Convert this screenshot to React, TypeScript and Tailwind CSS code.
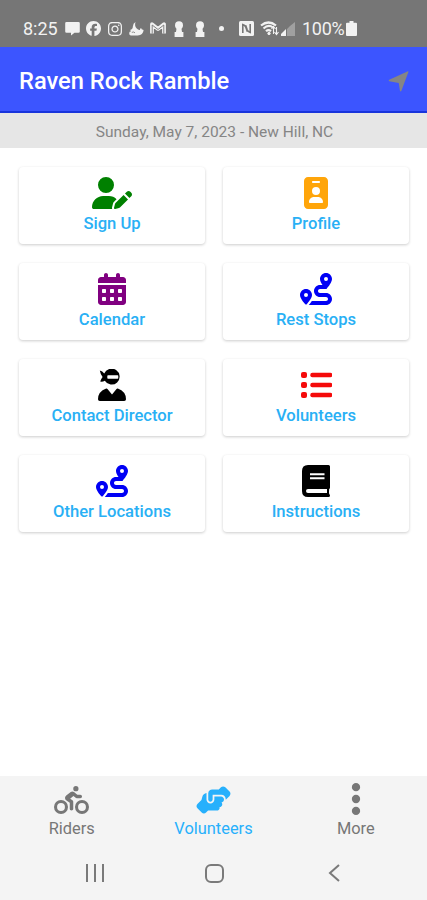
import React from 'react';
import {
  FaCalendarDays,
  FaEllipsisVertical,
  FaFacebook,
  FaHandshakeAngle,
  FaIdBadge,
  FaInstagram,
  FaPersonBiking,
  FaRoute,
  FaUserPen,
} from 'react-icons/fa6';

interface IconProps {
  className?: string;
}

interface MenuItem {
  label: string;
  icon: React.ComponentType<IconProps>;
  style: string;
}

const Ninja = ({ className }: IconProps) => (
  <svg viewBox="0 0 28 32" fill="currentColor" className={className}>
    <path d="M1.800 1.500Q4.500 2.200 6.200 4.600A8 8 0 1 1 6.800 11.800Q4.800 13 2.200 12.600 3.200 9.500 4.600 8 2.500 5.500 1.800 1.500z" />
    <rect x="9.300" y="6.300" width="11" height="3.400" rx=".7" fill="white" />
    <path d="M8.200 19.500q.8-.2 1.300.4L14 25.500l4.500-5.600q.5-.6 1.300-.4Q28 22.500 28 30.200q0 1.800-1.800 1.800H1.800Q0 32 0 30.200 0 22.500 8.200 19.500z" />
  </svg>
);

const List = ({ className }: IconProps) => (
  <svg viewBox="0 0 32 32" fill="currentColor" className={className}>
    {[3, 13, 23].map((y) => (
      <g key={y}>
        <rect x="1" y={y} width="6" height="6" rx="2" />
        <rect x="10.300" y={y + 0.8} width="22" height="4.400" rx="2" />
      </g>
    ))}
  </svg>
);

const Book = ({ className }: IconProps) => (
  <svg viewBox="0 0 28 32" fill="currentColor" className={className}>
    <path d="M6 0h20.500Q28 0 28 1.500v21q0 1-.8 1.500-.4 2.500 0 5 .8.500.8 1.500 0 1.500-1.500 1.500H6q-6 0-6-6V6Q0 0 6 0z" />
    <path d="M8 8.200h14.500v2H8zM8 12.200h14.500v2H8zM6 24h19v4H6q-2 0-2-2t2-2z" fill="white" />
  </svg>
);

const menuItems: MenuItem[] = [
  { label: 'Sign Up', icon: FaUserPen, style: 'w-10 text-[#008000]' },
  { label: 'Profile', icon: FaIdBadge, style: 'w-6 text-[#ffa50a]' },
  { label: 'Calendar', icon: FaCalendarDays, style: 'w-7 text-[#800080]' },
  { label: 'Rest Stops', icon: FaRoute, style: 'w-8 text-[#0000f5]' },
  { label: 'Contact Director', icon: Ninja, style: 'w-7 text-black' },
  { label: 'Volunteers', icon: List, style: 'w-8 text-[#f50a0a]' },
  { label: 'Other Locations', icon: FaRoute, style: 'w-8 text-[#0000f5]' },
  { label: 'Instructions', icon: Book, style: 'w-7 text-black' },
];

const Keyhole = ({ className }: IconProps) => (
  <svg viewBox="0 0 10 16" fill="currentColor" className={`h-4 w-2.5 ${className ?? ''}`}>
    <circle cx="5" cy="4.2" r="4" />
    <path d="M2.6 7h4.8l.6 4H9.4v5H.6v-5H2z" />
  </svg>
);

const StatusBar = () => (
  <div className="flex h-[47px] items-center bg-[#767676] pl-[23px] pt-[10px] text-[#f2f2f2]">
    <span className="w-[42px] text-[18px] leading-none">8:25</span>
    <svg viewBox="0 0 15 15" fill="currentColor" className="h-[15px] w-[15px]">
      <path d="M1.5 1h12q1.3 0 1.3 1.300v8.200q0 1.200-1.300 1.200H9.500L6 14.500v-2.800H1.500Q.2 11.700.2 10.500V2.300Q.2 1 1.500 1z" />
    </svg>
    <FaFacebook className="ml-1.5 h-[15px] w-[15px]" />
    <FaInstagram className="ml-1.5 h-4 w-4" />
    {/* Do-not-disturb moon */}
    <svg viewBox="0 0 15 14" fill="currentColor" className="ml-1.5 h-[14px] w-[15px]">
      <path d="M6.500 0q-1.200 3.800 1 6.200 1.800 2 3.400 1.700-.1-1.600 1.200-2-.1 1.700 2.500 2-.4 5.200-6 5.600H1.800Q0 13.100.2 11q0-1.500 2-1.700L1 8Q4 7.200 3.800 4.800 4.100 1.200 6.500 0z" />
      <path d="M2.800 10.400q1.800-1 3.200.4" fill="none" stroke="#767676" strokeWidth=".8" />
    </svg>
    <svg viewBox="0 0 16 13" fill="none" stroke="currentColor" className="ml-[6px] h-[13px] w-4">
      <path d="M2 11.500V2.200L8 7l6-4.800v9.300" strokeWidth="3.800" strokeLinejoin="round" />
      <path d="M2.200 11.500V3L8 7.500 13.800 3v8.500" stroke="#767676" strokeWidth=".9" />
    </svg>
    <Keyhole className="ml-2" />
    <Keyhole className="ml-[11px]" />
    <span className="ml-[14px] h-[5px] w-[5px] rounded-full bg-[#f2f2f2]" />
    {/* NFC */}
    <svg viewBox="0 0 15 15" className="ml-[15px] h-[15px] w-[15px]">
      <rect width="15" height="15" rx="1.500" fill="currentColor" />
      <path d="M3.800 12V3.500q2 .3 3 2.800l1.600 4.400M11.200 3v8.500q-2-.3-3-2.800L6.600 4.300" fill="none" stroke="#767676" strokeWidth="1.600" />
    </svg>
    {/* Wi-Fi */}
    <svg viewBox="0 0 19 15" fill="none" stroke="currentColor" className="ml-[6px] h-[15px] w-[19px]">
      <path d="M1 4.500Q8.500-1.500 16 4.500M3.500 7.500Q8.500 3 13 6.500M6 10.300Q8.500 8 11 10.300" strokeWidth="2.200" />
      <circle cx="9" cy="12.500" r="1.200" fill="currentColor" />
      <path d="M13.500 13V6m-2 2 2-2.500L15.500 8M16.500 6v7m-2-2 2 2.500 2-2.500" strokeWidth="1.100" />
    </svg>
    {/* Signal */}
    <svg viewBox="0 0 14 14" fill="currentColor" className="ml-[2px] h-[14px] w-[14px]">
      <path d="M0 14v-2l5-5v7z" />
      <path d="M6 14V7l3-3v10zM9 14V4l2.500-2v12zM11.500 14V2L14 0v14z" opacity=".35" />
    </svg>
    <span className="ml-[7px] w-[44px] text-[18px] leading-none tracking-[-0.3px]">100%</span>
    <svg viewBox="0 0 11 15" fill="currentColor" className="h-[15px] w-[11px]">
      <path d="M3.500 0h4v1.800H10q1 0 1 1V14q0 1-1 1H1q-1 0-1-1V2.800q0-1 1-1h2.500z" />
    </svg>
  </div>
);

const Header = () => (
  <header>
    <div className="flex h-[66px] items-center justify-between border-b-2 border-[#1834dc] bg-[#3c55ff] pl-[19px] pr-[18px] pt-1">
      <h1 className="pt-0.5 text-[23.7px] font-medium leading-none text-white">Raven Rock Ramble</h1>
      <svg viewBox="0 0 21 21" fill="#858585" className="h-[21px] w-[21px]">
        <path d="M20.500.7 13.300 20q-.7.900-1.300 0L10.700 12 1.200 10.200q-1.200-.8 0-1.500L19.900.3q.8-.1.600.4z" />
      </svg>
    </div>
    <div className="flex h-[35px] items-center justify-center bg-[#e6e6e6] pl-[2px] pt-[4px] text-[15.5px] text-[#858585]">
      Sunday, May 7, 2023 - New Hill, NC
    </div>
  </header>
);

const MenuCard = ({ label, icon: Icon, style }: MenuItem) => (
  <button className="flex h-[77px] flex-col items-center rounded-[4px] bg-white pt-[10px] shadow-[0_1px_3px_rgba(0,0,0,0.2)]">
    <Icon className={`h-8 ${style}`} />
    <span className="mt-1 text-[16.6px] font-medium leading-[22px] text-[#29b0f5]">{label}</span>
  </button>
);

const TabBar = () => (
  <nav className="grid h-[70px] grid-cols-3 text-[16.400px] leading-5 text-[#777]">
    <button className="flex flex-col items-center pl-px pt-[10px]">
      <FaPersonBiking className="h-7 w-[35px]" />
      <span className="mt-[5px]">Riders</span>
    </button>
    <button className="flex flex-col items-center pt-[10px] text-[#27b0fc]">
      <FaHandshakeAngle className="h-7 w-[35px]" />
      <span className="mt-[5px]">Volunteers</span>
    </button>
    <button className="flex flex-col items-center pt-1">
      <FaEllipsisVertical className="h-[38px] w-[38px]" />
      <span className="mt-px">More</span>
    </button>
  </nav>
);

// Android system navigation
const SystemNav = () => (
  <div className="flex flex-1 items-start justify-between pl-[86px] pr-[87px] pt-[18px] text-[#7a7a7a]">
    <div className="flex h-[18px] w-[18px] justify-between">
      <span className="w-0.5 bg-current" />
      <span className="w-0.5 bg-current" />
      <span className="w-0.5 bg-current" />
    </div>
    <div className="mr-1 h-[19px] w-[19px] rounded-[6px] border-2 border-current" />
    <svg viewBox="0 0 12 18" fill="none" stroke="currentColor" strokeWidth="2" className="h-[18px] w-3">
      <path d="M11 1 2 9l9 8" />
    </svg>
  </div>
);

export default function App() {
  return (
    <div className="flex h-[900px] w-[427px] flex-col overflow-hidden bg-white font-['Roboto',sans-serif]">
      <StatusBar />
      <Header />
      <main className="grid flex-1 grid-cols-2 content-start gap-x-[18px] gap-y-[19px] pl-[19px] pr-[18px] pt-[19px]">
        {menuItems.map((item) => (
          <MenuCard key={item.label} {...item} />
        ))}
      </main>
      <footer className="flex h-[124px] flex-col bg-[#f4f4f4]">
        <TabBar />
        <SystemNav />
      </footer>
    </div>
  );
}
